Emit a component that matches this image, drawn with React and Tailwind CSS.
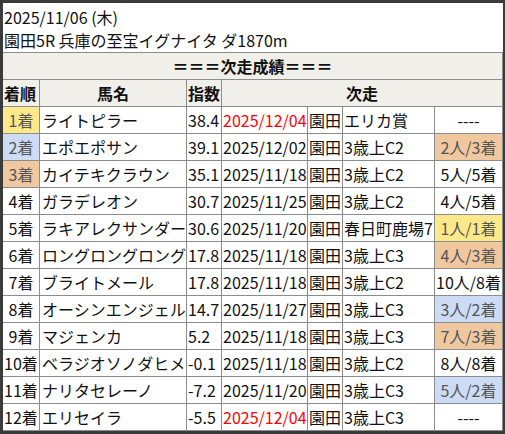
const W = [37, 147, 35, 86, 35, 92, 68];

const Y = "bg-[#fde98a] text-[#555]";
const B = "bg-[#ccdcf6] text-[#555]";
const O = "bg-[#efc8a0] text-[#555]";

const rows = [
  ["1着", Y, "ライトピラー", "38.4", "2025/12/04", true, "エリカ賞", "----", ""],
  ["2着", B, "エポエポサン", "39.1", "2025/12/02", false, "3歳上C2", "2人/3着", O],
  ["3着", O, "カイテキクラウン", "35.1", "2025/11/18", false, "3歳上C2", "5人/5着", ""],
  ["4着", "", "ガラデレオン", "30.7", "2025/11/25", false, "3歳上C2", "4人/5着", ""],
  ["5着", "", "ラキアレクサンダー", "30.6", "2025/11/20", false, "春日町鹿場7", "1人/1着", Y],
  ["6着", "", "ロングロングロング", "17.8", "2025/11/18", false, "3歳上C3", "4人/3着", O],
  ["7着", "", "ブライトメール", "17.8", "2025/11/18", false, "3歳上C2", "10人/8着", ""],
  ["8着", "", "オーシンエンジェル", "14.7", "2025/11/27", false, "3歳上C3", "3人/2着", B],
  ["9着", "", "マジェンカ", "5.2", "2025/11/18", false, "3歳上C3", "7人/3着", O],
  ["10着", "", "ベラジオソノダヒメ", "-0.1", "2025/11/18", false, "3歳上C2", "8人/8着", ""],
  ["11着", "", "ナリタセレーノ", "-7.2", "2025/11/20", false, "3歳上C3", "5人/2着", B],
  ["12着", "", "エリセイラ", "-5.5", "2025/12/04", true, "3歳上C3", "----", ""],
];

const cell = "h-[27px] border-r border-b border-[#8c8c8c] leading-[26px] whitespace-nowrap overflow-hidden shrink-0";

export default function App() {
  return (
    <div
      className="w-[505px] h-[434px] bg-white border-t-[3px] border-l-[3px] border-r-[2px] border-b-[3px] border-[#3b3b3b] text-[16px] text-[#111] overflow-hidden"
      style={{ fontFamily: '"Noto Sans CJK JP", "Noto Sans", sans-serif' }}
    >
      <div className="h-[50px] border-b border-[#8c8c8c] pt-[3px] pl-[1px] leading-[23px]">
        <div>2025/11/06 (木)</div>
        <div>園田5R 兵庫の至宝イグナイタ ダ1870m</div>
      </div>
      <div className={`${cell} w-[500px] bg-[#f1efea] font-bold text-center`}>＝＝＝次走成績＝＝＝</div>
      <div className="flex bg-[#f1efea] font-bold">
        <div className={`${cell} w-[37px] pl-[1px]`}>着順</div>
        <div className={`${cell} w-[147px] text-center`}>馬名</div>
        <div className={`${cell} w-[35px] pl-[1px]`}>指数</div>
        <div className={`${cell} w-[281px] text-center`}>次走</div>
      </div>
      {rows.map((r, i) => (
        <div key={i} className="flex">
          <div className={`${cell} w-[37px] text-center ${r[1]}`}>{r[0]}</div>
          <div className={`${cell} w-[147px] pl-[2px]`}>{r[2]}</div>
          <div className={`${cell} w-[35px] pl-[1px]`}>{r[3]}</div>
          <div className={`${cell} w-[86px] pl-[1px] ${r[5] ? "text-[#ff0000]" : ""}`}>{r[4]}</div>
          <div className={`${cell} w-[35px] pl-[1px]`}>園田</div>
          <div className={`${cell} w-[92px] pl-[1px]`}>{r[6]}</div>
          <div className={`${cell} w-[68px] text-center ${r[8]}`}>{r[7]}</div>
        </div>
      ))}
    </div>
  );
}
